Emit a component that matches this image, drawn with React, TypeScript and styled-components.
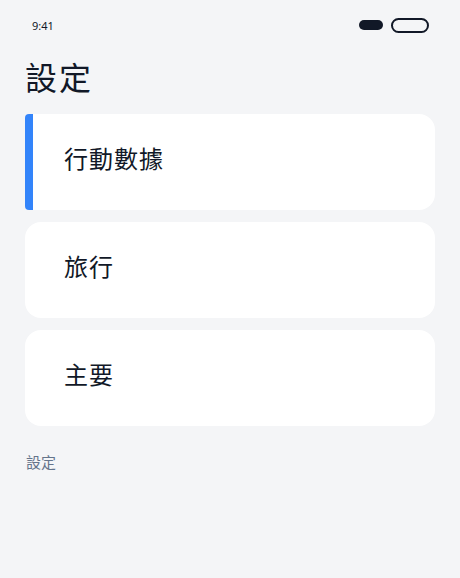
import styled, { createGlobalStyle } from "styled-components";

const GlobalStyle = createGlobalStyle`
  html, body {
    margin: 0;
    padding: 0;
    background: #f4f5f7;
  }
  body {
    font-family: "Noto Sans CJK TC", "Noto Sans", sans-serif;
    color: #111827;
  }
`;

const Screen = styled.div`
  width: 460px;
  min-height: 578px;
  box-sizing: border-box;
  padding: 0 25px;
  background: #f4f5f7;
`;

const StatusBar = styled.div`
  height: 50px;
  display: flex;
  align-items: center;
  justify-content: space-between;
  padding: 0 6px 0 7px;
`;

const Time = styled.span`
  font-family: "Noto Sans", sans-serif;
  font-size: 11px;
  color: #111827;
`;

const Indicators = styled.div`
  display: flex;
  align-items: center;
  gap: 8px;
`;

const Pill = styled.span<{ $filled?: boolean }>`
  display: block;
  box-sizing: border-box;
  width: ${(p) => (p.$filled ? "24px" : "38px")};
  height: ${(p) => (p.$filled ? "10px" : "15px")};
  border-radius: 8px;
  background: ${(p) => (p.$filled ? "#111827" : "transparent")};
  border: ${(p) => (p.$filled ? "none" : "2px solid #111827")};
`;

const Title = styled.h1`
  margin: 5px 0 17px;
  font-size: 32px;
  font-weight: 400;
  line-height: 42px;
  letter-spacing: 2px;
`;

const List = styled.div`
  display: flex;
  flex-direction: column;
  gap: 12px;
`;

const Card = styled.div<{ $active?: boolean }>`
  height: 96px;
  box-sizing: border-box;
  display: flex;
  align-items: center;
  background: #ffffff;
  border-radius: ${(p) => (p.$active ? "4px 16px 16px 4px" : "16px")};
  border-left: ${(p) => (p.$active ? "8px solid #3384fa" : "none")};
  padding-left: ${(p) => (p.$active ? "31px" : "39px")};
  padding-bottom: 9px;
  font-size: 24px;
  letter-spacing: 1px;
  color: #111827;
`;

const Footer = styled.p`
  margin: 25px 0 0 1px;
  font-size: 15px;
  color: #64748b;
`;

const items = ["行動數據", "旅行", "主要"];

export default function App() {
  return (
    <>
      <GlobalStyle />
      <Screen>
        <StatusBar>
          <Time>9:41</Time>
          <Indicators>
            <Pill $filled />
            <Pill />
          </Indicators>
        </StatusBar>
        <Title>設定</Title>
        <List>
          {items.map((label, i) => (
            <Card key={label} $active={i === 0}>
              {label}
            </Card>
          ))}
        </List>
        <Footer>設定</Footer>
      </Screen>
    </>
  );
}
